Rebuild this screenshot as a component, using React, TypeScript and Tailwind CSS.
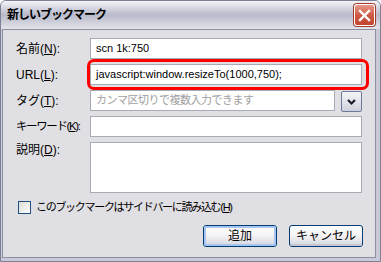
const font = "font-['Liberation_Sans','Noto_Sans_CJK_JP',sans-serif]";

const Label = ({ text, k, tight }: { text: string; k: string; tight?: boolean }) => (
  <span
    className={`w-[74px] shrink-0 whitespace-nowrap leading-none text-black ${
      tight ? "text-[11.5px] tracking-[-1.4px]" : "text-[12px]"
    }`}
  >
    {text}(<span className="underline underline-offset-1">{k}</span>):
  </span>
);

const Input = ({ value, placeholder, w = "w-[272px]" }: { value?: string; placeholder?: string; w?: string }) => (
  <div className={`${w} h-[21px] bg-white border border-[#a5acb5] flex items-center pl-[5px] text-[11px] leading-none`}>
    {value ? (
      <span className="text-black whitespace-nowrap">{value}</span>
    ) : (
      <span className="text-[#a0a0a0] tracking-[-0.5px] whitespace-nowrap">{placeholder}</span>
    )}
  </div>
);

const XpButton = ({ children, focused }: { children: React.ReactNode; focused?: boolean }) => (
  <div className="w-[74px] h-[22px] rounded-[3px] border border-[#003c74] bg-gradient-to-b from-white via-[#f2f2f4] to-[#d4d4de] flex items-center justify-center">
    <div
      className={`w-full h-full rounded-[2px] flex items-center justify-center text-[12px] leading-none text-black ${
        focused ? "shadow-[inset_0_0_0_2px_#a8c4f0]" : "shadow-[inset_0_-2px_0_#c6c6d2]"
      }`}
    >
      {children}
    </div>
  </div>
);

export default function App() {
  return (
    <div className={`${font} relative w-[381px] h-[262px] bg-white`}>
      <div className="w-[381px] h-[262px] flex flex-col rounded-t-[6px] border border-[#7f8096] bg-[#c9cad8] overflow-hidden">
        {/* title bar */}
        <div className="h-[28px] shrink-0 flex items-center justify-between pl-[6px] pr-[5px] bg-gradient-to-b from-[#f4f4f7] via-[#b9bacb] to-[#e4e4ea]">
          <span className="text-[12px] font-bold tracking-[-1px] text-black leading-none">新しいブックマーク</span>
          <div className="w-[21px] h-[22px] rounded-[3px] border border-white bg-gradient-to-b from-[#e7998a] via-[#cf5a45] to-[#c0442f] flex items-center justify-center shadow-[0_0_0_1px_#a43c2c]">
            <svg width="13" height="13" viewBox="0 0 13 13">
              <path d="M2 2 L11 11 M11 2 L2 11" stroke="white" strokeWidth="2.4" strokeLinecap="square" />
            </svg>
          </div>
        </div>

        {/* body */}
        <div className="flex-1 ml-[1px] mr-[4px] mb-[3px] border border-[#8e8fa5] bg-[#e0dfe3] flex flex-col pl-[13px] pt-[8px]">
          <div className="flex items-center h-[21px]">
            <Label text="名前" k="N" />
            <Input value="scn 1k:750" />
          </div>
          <div className="flex items-center h-[21px] mt-[5px]">
            <Label text="URL" k="L" />
            <Input value="javascript:window.resizeTo(1000,750);" />
          </div>
          <div className="flex items-center h-[21px] mt-[5px]">
            <Label text="タグ" k="T" />
            <Input placeholder="カンマ区切りで複数入力できます" w="w-[245px]" />
            <div className="ml-[6px] mt-[2px] w-[21px] h-[21px] rounded-[2px] border border-[#6c7a9c] bg-gradient-to-b from-[#f5f5f8] to-[#cfd0dc] flex items-center justify-center">
              <svg width="11" height="8" viewBox="0 0 11 8">
                <path d="M2 2 L5.5 5.5 L9 2" stroke="#1a1a2a" strokeWidth="2.2" fill="none" />
              </svg>
            </div>
          </div>
          <div className="flex items-center h-[21px] mt-[5px]">
            <Label text="キーワード" k="K" tight />
            <Input />
          </div>
          <div className="flex items-start mt-[5px]">
            <div className="w-[74px] shrink-0 flex pt-[2px]">
              <Label text="説明" k="D" />
            </div>
            <div className="w-[272px] h-[51px] bg-white border border-[#a5acb5]" />
          </div>
          <div className="flex items-center mt-[8px] pl-[2px]">
            <div className="w-[13px] h-[13px] border border-[#1c5180] bg-gradient-to-br from-[#dcdcd7] to-white" />
            <span className="ml-[5px] whitespace-nowrap text-[11px] tracking-[-1.3px] leading-none text-black">
              このブックマークはサイドバーに読み込む(<span className="underline underline-offset-1">H</span>)
            </span>
          </div>
          <div className="flex justify-end gap-[12px] mt-[11px] pr-[12px]">
            <XpButton focused>追加</XpButton>
            <XpButton>キャンセル</XpButton>
          </div>
        </div>
      </div>

      {/* red annotation outline */}
      <div className="absolute left-[87px] top-[59px] w-[282px] h-[31px] rounded-[7px] border-[3px] border-[#ff0000]" />
    </div>
  );
}
